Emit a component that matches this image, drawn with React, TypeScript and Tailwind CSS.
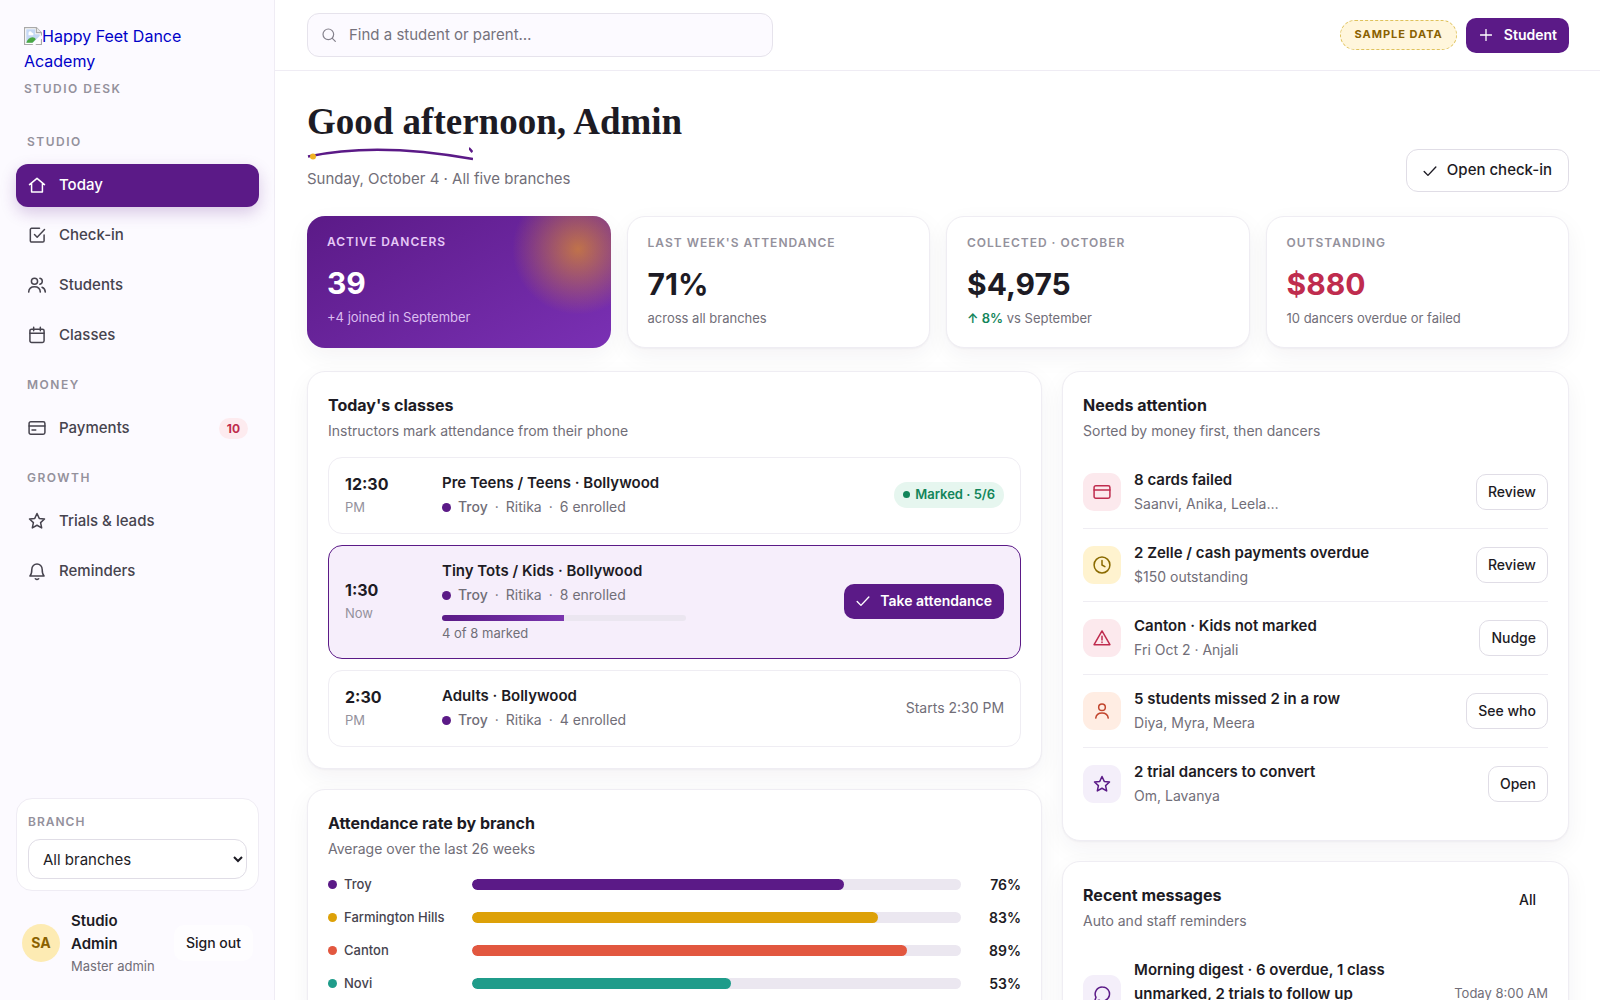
import type { ReactNode } from "react";
import clsx from "clsx";

const paths: Record<string, ReactNode> = {
  home: <path d="M3 11.5 12 4l9 7.5M5.5 9.8V20.5h13V9.8" />,
  checkin: (
    <path d="M9 11.5l3.2 3.2L21 5.5M20.5 12v7a1.5 1.5 0 0 1-1.5 1.5H5.5A1.5 1.5 0 0 1 4 19V5.5A1.5 1.5 0 0 1 5.5 4H15" />
  ),
  students: (
    <>
      <circle cx="9" cy="7.5" r="3.7" />
      <path d="M2 20.5c.3-4 3.2-6.3 7-6.3s6.7 2.3 7 6.3M15.5 4a3.7 3.7 0 0 1 0 7.2M18 14.7c2.3.9 3.8 3 4 5.8" />
    </>
  ),
  calendar: (
    <>
      <rect x="3.5" y="5" width="17" height="16" rx="2" />
      <path d="M3.5 10h17M8 2.8v4.2M16 2.8v4.2" />
    </>
  ),
  payments: (
    <>
      <rect x="2.5" y="4.5" width="19" height="15" rx="2" />
      <path d="M2.5 9.5h19M6 14.5h4.5" />
    </>
  ),
  card: (
    <>
      <rect x="2.5" y="4.5" width="19" height="15" rx="2" />
      <path d="M2.5 9.5h19" />
    </>
  ),
  star: (
    <path d="M12 3l2.7 5.9 6.3.7-4.7 4.3 1.3 6.4L12 17.1l-5.6 3.2 1.3-6.4L3 9.6l6.3-.7z" />
  ),
  bell: (
    <path d="M3.5 18h17c-1.7-1.8-2.3-3.5-2.3-8.2a6.2 6.2 0 0 0-12.4 0c0 4.7-.6 6.4-2.3 8.2zM10 21.3c1.2 1 2.8 1 4 0" />
  ),
  clock: (
    <>
      <circle cx="12" cy="12" r="9.5" />
      <path d="M12 6.5V12l3.5 2" />
    </>
  ),
  alert: <path d="M12 3.5 21.5 20h-19zM12 10v4.5M12 16.8v.6" />,
  user: (
    <>
      <circle cx="12" cy="7.5" r="4" />
      <path d="M4.5 20.5c.5-4 3.5-6.2 7.5-6.2s7 2.2 7.5 6.2" />
    </>
  ),
  message: (
    <path d="M12.5 3.5a8.5 8.5 0 1 1-4 16L3 21l1.8-5A8.5 8.5 0 0 1 12.5 3.5z" />
  ),
  search: (
    <>
      <circle cx="11" cy="11" r="8" />
      <path d="M17 17l4.5 4.5" />
    </>
  ),
  plus: <path d="M12 1v22M1 12h22" strokeWidth="2.6" />,
  check: <path d="M2 13l6.5 6.5L22 5" strokeWidth="2.4" />,
};

function Icon({ name, className }: { name: string; className?: string }) {
  return (
    <svg
      viewBox="0 0 24 24"
      fill="none"
      stroke="currentColor"
      strokeWidth="1.8"
      strokeLinecap="round"
      strokeLinejoin="round"
      aria-hidden="true"
      className={clsx("shrink-0", className)}
    >
      {paths[name]}
    </svg>
  );
}

type NavItem = { label: string; icon: string; active?: boolean; count?: number };

const nav: { title: string; items: NavItem[] }[] = [
  {
    title: "Studio",
    items: [
      { label: "Today", icon: "home", active: true },
      { label: "Check-in", icon: "checkin" },
      { label: "Students", icon: "students" },
      { label: "Classes", icon: "calendar" },
    ],
  },
  { title: "Money", items: [{ label: "Payments", icon: "payments", count: 10 }] },
  {
    title: "Growth",
    items: [
      { label: "Trials & leads", icon: "star" },
      { label: "Reminders", icon: "bell" },
    ],
  },
];

const stats = [
  { label: "Last week's attendance", value: "71%", note: "across all branches" },
  { label: "Collected · October", value: "$4,975", change: "↑ 8%", note: "vs September" },
  { label: "Outstanding", value: "$880", note: "10 dancers overdue or failed", bad: true },
];

const classes = [
  {
    time: "12:30",
    sub: "PM",
    name: "Pre Teens / Teens · Bollywood",
    enrolled: 6,
    state: "marked",
  },
  {
    time: "1:30",
    sub: "Now",
    name: "Tiny Tots / Kids · Bollywood",
    enrolled: 8,
    marked: 4,
    state: "now",
  },
  { time: "2:30", sub: "PM", name: "Adults · Bollywood", enrolled: 4, state: "later" },
];

const branches = [
  { name: "Troy", rate: 76, color: "bg-[#5b1a87]" },
  { name: "Farmington Hills", rate: 83, color: "bg-[#dda108]" },
  { name: "Canton", rate: 89, color: "bg-[#e2573f]" },
  { name: "Novi", rate: 53, color: "bg-[#1f9c8a]" },
];

const attention = [
  { icon: "card", tone: "bg-[#fce9ed] text-[#bf2c4e]", title: "8 cards failed", sub: "Saanvi, Anika, Leela…", action: "Review" },
  { icon: "clock", tone: "bg-[#fff3cf] text-[#8a6a00]", title: "2 Zelle / cash payments overdue", sub: "$150 outstanding", action: "Review" },
  { icon: "alert", tone: "bg-[#fce9ed] text-[#bf2c4e]", title: "Canton · Kids not marked", sub: "Fri Oct 2 · Anjali", action: "Nudge" },
  { icon: "user", tone: "bg-[#ffede3] text-[#c2452d]", title: "5 students missed 2 in a row", sub: "Diya, Myra, Meera", action: "See who" },
  { icon: "star", tone: "bg-[#f4effa] text-[#5b1a87]", title: "2 trial dancers to convert", sub: "Om, Lavanya", action: "Open" },
];

function Eyebrow({ children, className }: { children: ReactNode; className: string }) {
  return (
    <div className={clsx("text-xs leading-[18px] font-semibold uppercase", className)}>
      {children}
    </div>
  );
}

function Card({ children, className }: { children: ReactNode; className?: string }) {
  return (
    <section
      className={clsx(
        "rounded-[18px] border border-[#efedf3] bg-white px-5 shadow-[0_1px_2px_rgba(30,15,50,0.04),0_8px_24px_rgba(30,15,50,0.05)]",
        className,
      )}
    >
      {children}
    </section>
  );
}

function CardHead({ title, sub }: { title: string; sub: string }) {
  return (
    <div>
      <h2 className="text-base leading-[26px] font-bold">{title}</h2>
      <p className="text-sm leading-[26px] text-[#716e78]">{sub}</p>
    </div>
  );
}

function Sidebar() {
  return (
    <aside className="flex w-[275px] shrink-0 flex-col border-r border-[#efecf4] bg-[#fcfaff] pt-6 pr-[15px] pb-[23px] pl-4">
      <div className="px-2">
        <a href="#" className="block text-base leading-6 text-[#0000c8]">
          {/* missing logo, alt text stays in its place */}
          <svg viewBox="0 0 16 16" className="mb-1 inline size-[18px]" aria-hidden="true">
            <path d="M.5.5h10.5l4.5 4.5V15.5H.5z" fill="#fff" stroke="#a9a9a9" />
            <path d="M2 2h8v4.5h4V8L8 14H2z" fill="#c5d8f5" />
            <path d="M4 5.5a1.5 1.5 0 0 1 3-.3A1.2 1.2 0 0 1 8 7.3H4z" fill="#fff" />
            <path d="M2 14c1-3 3-5 5.5-5 1.3 0 2.5.7 3 1.8L7.5 14z" fill="#4aa843" />
            <path d="M11 .5V5h4.5" fill="#e8e8e8" stroke="#a9a9a9" />
            <path d="M16 7v3l-6 6H7.5z" fill="#fcfaff" />
          </svg>
          Happy Feet Dance Academy
        </a>
        <Eyebrow className="mt-[7px] tracking-[1.5px] text-[#94919c]">Studio desk</Eyebrow>
      </div>

      <nav className="mt-4">
        {nav.map((group) => (
          <div key={group.title}>
            <Eyebrow className="px-[11px] pt-[19px] pb-[13px] tracking-[1.5px] text-[#94919c]">
              {group.title}
            </Eyebrow>
            <div className="flex flex-col gap-[7px]">
              {group.items.map((item) => (
                <a
                  key={item.label}
                  href="#"
                  className={clsx(
                    "flex h-[43px] items-center gap-3 rounded-xl px-[11px] text-[15px] font-medium",
                    item.active
                      ? "bg-[#5b1a87] text-white shadow-[0_6px_16px_rgba(91,26,135,0.22)]"
                      : "text-[#46434e]",
                  )}
                >
                  <Icon name={item.icon} className="size-5" />
                  {item.label}
                  {item.count && (
                    <span className="ml-auto rounded-full bg-[#fdebef] px-2 text-xs leading-[21px] font-bold text-[#bf2c4e]">
                      {item.count}
                    </span>
                  )}
                </a>
              ))}
            </div>
          </div>
        ))}
      </nav>

      <div className="mt-auto rounded-2xl border border-[#efecf4] bg-white px-[11px] pt-[14px] pb-[11px]">
        <label htmlFor="branch">
          <Eyebrow className="tracking-[1px] text-[#94919c]">Branch</Eyebrow>
        </label>
        <select
          id="branch"
          className="mt-2 h-10 w-full rounded-xl border border-[#e0dde6] bg-white px-[10px] text-[15px] text-[#1d1b24]"
        >
          <option>All branches</option>
        </select>
      </div>

      <div className="mt-[18px] flex items-center gap-[11px] px-[6px]">
        <div className="flex size-[38px] shrink-0 items-center justify-center rounded-full bg-[#fdebb3] text-sm font-bold text-[#8a6100]">
          SA
        </div>
        <div className="min-w-0 flex-1">
          <div className="w-16 text-[15px] leading-[23px] font-semibold">Studio Admin</div>
          <div className="text-[13px] leading-[22px] whitespace-nowrap text-[#716e78]">
            Master admin
          </div>
        </div>
        <button className="h-9 shrink-0 rounded-[10px] bg-white/60 px-3 text-sm font-medium">
          Sign out
        </button>
      </div>
    </aside>
  );
}

function TopBar() {
  return (
    <header className="flex h-[71px] items-center gap-[9px] border-b border-[#efecf4] pr-[31px] pl-8">
      <label className="flex h-11 w-[466px] items-center gap-3 rounded-xl border border-[#e6e3ec] bg-[#fcfaff] px-[13px] text-[#85828d]">
        <Icon name="search" className="size-4" />
        <input
          type="search"
          aria-label="Find a student or parent"
          placeholder="Find a student or parent…"
          className="w-full bg-transparent text-[15px] outline-none placeholder:text-[#75727c]"
        />
      </label>
      <span className="ml-auto rounded-full border border-dashed border-[#dfc25c] bg-[#fff6dc] px-[13px] pb-[2px] text-[11px] leading-[26px] font-bold tracking-[1px] text-[#8a6100]">
        SAMPLE DATA
      </span>
      <button className="flex h-[35px] items-center gap-[10px] rounded-[10px] bg-[#5b1a87] px-3 text-sm font-semibold text-white">
        <Icon name="plus" className="mx-[2px] size-3" />
        Student
      </button>
    </header>
  );
}

function Meta({ enrolled }: { enrolled: number }) {
  return (
    <div className="flex items-center gap-[7px] text-sm leading-6 text-[#716e78]">
      <span className="size-[9px] rounded-full bg-[#5b1a87]" />
      <span className="font-medium">Troy</span>
      <span>·</span>
      <span>Ritika</span>
      <span>·</span>
      <span>{enrolled} enrolled</span>
    </div>
  );
}

function TodaysClasses() {
  return (
    <Card className="pt-5 pb-[21px]">
      <CardHead title="Today's classes" sub="Instructors mark attendance from their phone" />
      <div className="mt-[13px] flex flex-col gap-[11px]">
        {classes.map((c) => (
          <div
            key={c.time}
            className={clsx(
              "flex items-center rounded-[14px] border px-4 pt-3 pb-[14px]",
              c.state === "now" ? "border-[#5b1a87] bg-[#f6eefb]" : "border-[#efedf3]",
            )}
          >
            <div className="w-[97px] shrink-0">
              <div className="text-base leading-6 font-bold">{c.time}</div>
              <div className="text-[13px] leading-[22px] text-[#94919c]">{c.sub}</div>
            </div>
            <div className="flex-1">
              <div className="text-[15px] leading-[25px] font-semibold">{c.name}</div>
              <Meta enrolled={c.enrolled} />
              {c.marked && (
                <>
                  <div className="mt-2 h-[6px] w-[244px] overflow-hidden rounded-full bg-[#ebe6f0]">
                    <div
                      className="h-full bg-linear-to-r from-[#5b1a87] to-[#7a35ae]"
                      style={{ width: `${(c.marked / c.enrolled) * 100}%` }}
                    />
                  </div>
                  <div className="mt-[1px] text-[13px] leading-[22px] text-[#716e78]">
                    {c.marked} of {c.enrolled} marked
                  </div>
                </>
              )}
            </div>
            {c.state === "marked" && (
              <span className="flex h-[26px] items-center gap-[5px] rounded-full bg-[#e6f6ef] px-[9px] text-[13px] font-semibold text-[#12855a]">
                <span className="size-[7px] rounded-full bg-current" />
                Marked · 5/6
              </span>
            )}
            {c.state === "now" && (
              <button className="flex h-[35px] items-center gap-[10px] rounded-[10px] bg-[#5b1a87] px-3 text-sm font-semibold text-white">
                <Icon name="check" className="size-[14px]" />
                Take attendance
              </button>
            )}
            {c.state === "later" && (
              <span className="text-sm text-[#716e78]">Starts 2:30 PM</span>
            )}
          </div>
        ))}
      </div>
    </Card>
  );
}

function BranchRates() {
  return (
    <Card className="pt-5 pb-5">
      <CardHead title="Attendance rate by branch" sub="Average over the last 26 weeks" />
      <div className="mt-[6px]">
        {branches.map((b) => (
          <div key={b.name} className="flex h-[33px] items-center">
            <div className="flex w-[144px] items-center gap-[7px] text-[13px] font-medium whitespace-nowrap text-[#46434e]">
              <span className={clsx("size-[9px] rounded-full", b.color)} />
              {b.name}
            </div>
            <div className="h-[11px] flex-1 overflow-hidden rounded-full bg-[#ebe7f0]">
              <div className={clsx("h-full rounded-full", b.color)} style={{ width: `${b.rate}%` }} />
            </div>
            <div className="w-[60px] text-right text-sm font-semibold">{b.rate}%</div>
          </div>
        ))}
      </div>
    </Card>
  );
}

function Row({
  icon,
  tone,
  title,
  sub,
  children,
}: {
  icon: string;
  tone: string;
  title: string;
  sub?: string;
  children: ReactNode;
}) {
  return (
    <li className="flex items-center gap-[13px] border-b border-[#efedf3] py-3 last:border-b-0">
      <span className={clsx("flex size-[38px] shrink-0 items-center justify-center rounded-[11px]", tone)}>
        <Icon name={icon} className="size-5" />
      </span>
      <div className="min-w-0 flex-1">
        <div className="text-[15px] leading-6 font-semibold">{title}</div>
        <div className="min-h-6 text-sm leading-6 text-[#716e78]">{sub}</div>
      </div>
      {children}
    </li>
  );
}

function NeedsAttention() {
  return (
    <Card className="pt-5 pb-5">
      <CardHead title="Needs attention" sub="Sorted by money first, then dancers" />
      <ul className="mt-3">
        {attention.map((a) => (
          <Row key={a.title} icon={a.icon} tone={a.tone} title={a.title} sub={a.sub}>
            <button className="h-9 rounded-[10px] border border-[#e0dde6] bg-white px-[11px] text-sm font-medium">
              {a.action}
            </button>
          </Row>
        ))}
      </ul>
    </Card>
  );
}

function RecentMessages() {
  return (
    <Card className="pt-5 pb-5">
      <div className="flex items-start justify-between">
        <CardHead title="Recent messages" sub="Auto and staff reminders" />
        <button className="h-9 rounded-[10px] px-3 text-sm font-medium">All</button>
      </div>
      <ul className="mt-3">
        <Row
          icon="message"
          tone="bg-[#f4effa] text-[#5b1a87]"
          title="Morning digest · 6 overdue, 1 class unmarked, 2 trials to follow up"
        >
          <span className="ml-12 shrink-0 text-[13px] text-[#716e78]">Today 8:00 AM</span>
        </Row>
      </ul>
    </Card>
  );
}

export default function App() {
  return (
    <div className="flex h-screen overflow-hidden bg-white font-['Inter',sans-serif] text-[#1d1b24]">
      <Sidebar />
      <div className="min-w-0 flex-1 overflow-y-auto [scrollbar-width:none]">
        <TopBar />
        <main className="pt-[26px] pr-[31px] pb-8 pl-8">
          <div className="flex items-end justify-between">
            <div>
              <h1 className="font-['Liberation_Serif',serif] text-[37px] leading-[50px] font-bold">
                Good afternoon, Admin
              </h1>
              <svg viewBox="0 0 166 14" className="h-[14px] w-[166px]" fill="none" aria-hidden="true">
                <path
                  d="M1 9.5C50-1 105 1 166 12M162 1.5c1 0 2 2.5 3.5 3.5"
                  stroke="#5b1a87"
                  strokeWidth="2.5"
                />
                <circle cx="6" cy="9.5" r="3" fill="#f0b323" />
              </svg>
              <p className="mt-[5px] text-[15px] leading-[26px] text-[#716e78]">
                Sunday, October 4 · All five branches
              </p>
            </div>
            <button className="flex h-[43px] items-center gap-[10px] rounded-xl border border-[#e0dde6] bg-white px-4 text-[15px] font-medium">
              <Icon name="check" className="size-[14px]" />
              Open check-in
            </button>
          </div>

          <div className="mt-6 grid grid-cols-4 gap-4">
            <section className="relative overflow-hidden rounded-[18px] bg-linear-150 from-[#5b1a87] to-[#7a30b4] px-5 pt-[17px] text-white shadow-[0_8px_24px_rgba(30,15,50,0.05)]">
              <div className="absolute -top-10 -right-10 size-[146px] rounded-full bg-[radial-gradient(closest-side,rgba(242,160,20,0.62),rgba(242,160,20,0)_90%)]" />
              <Eyebrow className="tracking-[1px] text-[#e6c9f7]">Active dancers</Eyebrow>
              <div className="mt-3 text-[30px] leading-10 font-bold">39</div>
              <div className="mt-[2px] text-[13px] leading-6 text-[#dcbdf0]">+4 joined in September</div>
            </section>
            {stats.map((s) => (
              <Card key={s.label} className="pt-[17px] pb-[17px]">
                <Eyebrow className="tracking-[1px] text-[#94919c]">{s.label}</Eyebrow>
                <div
                  className={clsx(
                    "mt-3 text-[30px] leading-10 font-bold",
                    s.bad && "text-[#bf2c4e]",
                  )}
                >
                  {s.value}
                </div>
                <div className="mt-[2px] text-[13px] leading-6 text-[#716e78]">
                  {s.change && <b className="font-semibold text-[#12855a]">{s.change}</b>} {s.note}
                </div>
              </Card>
            ))}
          </div>

          <div className="mt-[23px] grid grid-cols-[1.45fr_1fr] items-start gap-5">
            <div className="flex min-w-0 flex-col gap-5">
              <TodaysClasses />
              <BranchRates />
            </div>
            <div className="flex min-w-0 flex-col gap-5">
              <NeedsAttention />
              <RecentMessages />
            </div>
          </div>
        </main>
      </div>
    </div>
  );
}
